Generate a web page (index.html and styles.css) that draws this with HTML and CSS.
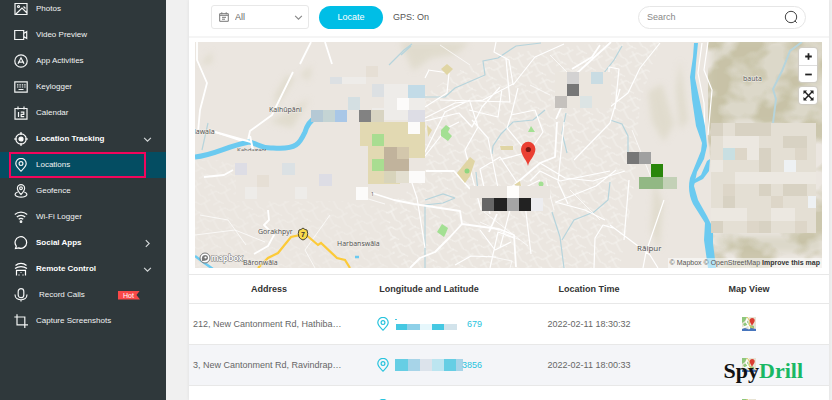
FILE: index.html
```html
<!DOCTYPE html>
<html lang="en">
<head>
<meta charset="utf-8">
<meta name="viewport" content="width=device-width, initial-scale=1">
<title>Locations</title>
<link rel="stylesheet" href="styles.css">
</head>
<body>
<svg class="defs" aria-hidden="true">
  <symbol id="pin" viewBox="0 0 14 14"><path d="M7 13.2C4.5 10.7 1.8 8.4 1.8 5.6a5.2 5.2 0 0 1 10.4 0c0 2.8-2.7 5.1-5.2 7.6z"/><circle cx="7" cy="5.6" r="1.9"/></symbol>
  <symbol id="down" viewBox="0 0 8 8"><path d="M1 2.5l3 3 3-3"/></symbol>
  <symbol id="right" viewBox="0 0 8 8"><path d="M2.5 1l3 3-3 3"/></symbol>
  <symbol id="minimap" viewBox="0 0 14 14">
    <path fill="#e8e3d3" d="M0 0h14v14H0z"/><path fill="#8fc77c" d="M0 0h5l-2 4-3 2zM1 7l5-3 1 5-4 1zM7 8l5 1v3H7z"/>
    <path stroke="#fff" stroke-width="1.4" fill="none" d="M6 0L4 5l3 4 1 5M0 11l7-3"/><path stroke="#e9c95f" fill="none" d="M5 0l3 4-1 4 5 4"/>
    <path fill="#4775bd" d="M0 12l3-1 4 1.5L9 11l5 1v2H0z"/><path fill="#db3d31" d="M10 9C9 6.500 7.700 5.500 7.700 3.500a2.500 2.500 0 0 1 5 0C12.700 5.500 11 6.500 10 9z"/>
  </symbol>
</svg>

<nav class="sidebar" aria-label="Main">
  <a class="item" href="#"><svg class="icon" viewBox="0 0 14 14"><path d="M1 1.500h12v11H1zM2 12l6-6 5 5M9.500 4.500l2 2"/><circle cx="4.500" cy="4.500" r="1"/></svg><span>Photos</span></a>
  <a class="item" href="#"><svg class="icon" viewBox="0 0 14 14"><path d="M.7 2.500h9v9h-9zM9.700 5.500l3-2v7l-3-2"/></svg><span>Video Preview</span></a>
  <a class="item" href="#"><svg class="icon" viewBox="0 0 14 14"><circle cx="7" cy="7" r="6.200"/><path d="M4 9.800L7 3.800l3 6M4 8.200h6"/></svg><span>App Activities</span></a>
  <a class="item" href="#"><svg class="icon" viewBox="0 0 14 14"><path d="M.8 1.800h12.400v10.400H.8z"/><path d="M3 4.800h1.400m1 0h1.400m1 0h1.400m1 0h1.400M3 7h1.400m1 0h1.400m1 0h1.400m1 0h1.400M4.500 9.500h5"/></svg><span>Keylogger</span></a>
  <a class="item" href="#"><svg class="icon" viewBox="0 0 14 14"><path d="M1 2.500h12v10.700H1zM4 .6v3M10 .6v3M4.500 6v5M6.800 6.200h3v2.200h-2.600v2.300h3"/></svg><span>Calendar</span></a>
  <a class="item group" href="#"><svg class="icon" viewBox="0 0 14 14"><circle cx="7" cy="7" r="5.200"/><circle class="solid" cx="7" cy="7" r="2"/><path d="M7 0v3M7 11v3M0 7h3M11 7h3"/></svg><span>Location Tracking</span><svg class="arrow"><use href="#down"/></svg></a>
  <a class="item active" href="#" aria-current="page"><svg class="icon"><use href="#pin"/></svg><span>Locations</span></a>
  <a class="item" href="#"><svg class="icon" viewBox="0 0 14 14"><path d="M7 10.500C5 8.500 3.400 6.500 3.400 4.300a3.600 3.600 0 0 1 7.200 0C10.600 6.500 9 8.500 7 10.500z"/><circle cx="7" cy="4.200" r="1.400"/><path d="M3.800 8C-.5 9.300.2 13.200 7 13.200S14.500 9.300 10.200 8"/></svg><span>Geofence</span></a>
  <a class="item" href="#"><svg class="icon" viewBox="0 0 14 14"><path d="M.8 4.500c3.600-3.300 8.800-3.300 12.400 0M2.800 7c2.400-2.300 6-2.300 8.400 0M4.700 9.300c1.400-1.200 3.200-1.200 4.600 0"/><circle class="solid" cx="7" cy="11.700" r=".8"/></svg><span>Wi-Fi Logger</span></a>
  <a class="item group" href="#"><svg class="icon" viewBox="0 0 14 14"><path d="M1.500 12.500l.8-2.400a5.800 5.800 0 1 1 2.400 1.800z"/></svg><span>Social Apps</span><svg class="arrow"><use href="#right"/></svg></a>
  <a class="item group" href="#"><svg class="icon" viewBox="0 0 14 14"><path d="M1.500 3.500c3.200-2.800 7.800-2.800 11 0M1 6.500c3.500-2.600 8.500-2.600 12 0M2.500 13.500V8.300h9v5.200M5 13.500v-1M7 11v-.8M9 13.500v-1"/></svg><span>Remote Control</span><svg class="arrow"><use href="#down"/></svg></a>
  <a class="item nested" href="#"><svg class="icon" viewBox="0 0 14 14"><rect x="4.200" y=".7" width="5.600" height="9" rx="2.800"/><path d="M1 6.500c0 7 12 7 12 0M7 11.800v1.800"/></svg><span>Record Calls</span><em class="hot">Hot</em></a>
  <a class="item" href="#"><svg class="icon" viewBox="0 0 14 14"><path d="M.3 3h10.500v11M3 .3v10.500h11"/></svg><span>Capture Screenshots</span></a>
</nav>

<main class="panel">
  <form class="toolbar">
    <label class="period">
      <svg class="small" viewBox="0 0 10 10"><path d="M.7 1.700h8.600v7.600H.7zM.7 3.300h8.600M2.800.3v2M7.200.3v2M3 5.300h4M3 7.200h3"/></svg>
      <select aria-label="Period"><option>All</option></select>
      <svg class="caret"><use href="#down"/></svg>
    </label>
    <button class="locate" type="button">Locate</button>
    <span class="gps">GPS: On</span>
    <label class="search">
      <input type="search" placeholder="Search" aria-label="Search">
      <svg class="lens" viewBox="0 0 14 14"><circle cx="7" cy="7" r="5.700"/><path d="M10.800 10.800l2 2"/></svg>
    </label>
  </form>

  <section class="map" aria-label="Map">
    <svg class="canvas" viewBox="195 42 627 226" preserveAspectRatio="xMidYMid slice">
      <defs>
        <filter id="soft" x="-20%" y="-20%" width="140%" height="140%"><feGaussianBlur stdDeviation="3"/></filter>
        <filter id="relief" x="0" y="0" width="100%" height="100%" color-interpolation-filters="sRGB"><feTurbulence type="fractalNoise" baseFrequency=".03 .04" numOctaves="3" seed="8"/><feColorMatrix values="0 0 0 0 .75  0 0 0 0 .73  0 0 0 0 .6  4 0 0 0 -1.600"/></filter>
        <pattern id="streets" width="23" height="19" patternUnits="userSpaceOnUse" patternTransform="rotate(-28)"><path d="M0 4h9l3 5h11M5 0v12l5 7M16 9v10M0 15h8M16 0l3 4v5" fill="none" stroke="#fbfaf8" stroke-width=".7"/></pattern>
        <clipPath id="hills"><path d="M708 42h114v226H714l-3-100-6-60z"/></clipPath>
      </defs>
      <path fill="#ebe6e0" d="M195 42h627v226H195z"/>
      <path fill="url(#streets)" opacity=".8" d="M425 95l40-28 55-15 90-10h50l-20 60-5 80-15 86H395l-10-60 40-30z"/>
      <path fill="url(#streets)" opacity=".45" d="M195 160h90l60 40 50 10v58H195z"/>
      <g filter="url(#soft)" fill="#d6d1bb" opacity=".5">
        <path d="M400 42h70l-14 12-25 4-18 13zM275 95l12-20 8 3-20 30zM270 122l40-24-18 30zM300 75l12-10-3 16zM200 65l12-14v12zM648 92l14-8 12 40-10 18-12-20zM654 180l9 25-4 45-8-20zM680 60l8 60-8 10-4-40z"/>
      </g>
      <g clip-path="url(#hills)">
        <path fill="#dcd8c9" filter="url(#soft)" d="M712 42h110v80H712zM715 236h107v16H720z"/>
        <path filter="url(#relief)" opacity=".7" d="M708 42h114v226H708z"/>
      </g>

      <g fill="none" stroke="#b6d4dc" stroke-width="1.200">
        <path d="M425 97h20l10-9 30-13-2-14 15-3 18-12 25-3M545 110l-12 10-20 2-12 12-8 12-1 8M425 200l18-6 12 4M455 198l-12 5-18 2v63M476 172l2 20M552 212l8 25 4 31M562 240l12-20 20-8 14-12 2-18M566 113l-4 20 5 20M600 78l14-18 8-14M610 120l12 4 6 12v20M401 55l10-9M202 150l6-27M389 65l15-15 8-6"/>
        <path stroke-width="2" d="M773 123l3-24-3-10 9-18 8-20 12-9"/>
      </g>
      <g fill="none" stroke="#fff" stroke-linejoin="round">
        <path stroke-width="1.800" d="M197 42v18l10 23-7 27-2 22M215 132l36 12 4 12M248 140l2-9 22-16 21-43M300 64l11-22M325 42l7 22M204 177l20-2 9-5M268 210l1 10-5 5 10 10-6 11-14 8M372 193l22 7 20 4 46 7 2 13M410 268l10-10 15-6 15-15 12-13 37 5 15 6 2 32M497 214l-8 18M512 187l28-24 15-6 2-35M426 171h28l16 18M611 42l-35 32-20 45M600 45l-8 12-20 12"/>
        <path stroke-width="1.200" d="M425 118l30-15 28-3 30-16-4-24-15-8 2-10M500 87l-18 20-10 20-13-14-34 8M513 85l22-28 29-13M470 102l8 25-13 23 16 60M472 120l16 18 10 50 12 20M428 70l21 3-2 20-22 14M425 78l4-8M425 152l20-40 25-12M425 156l22-28 12-6M440 100l70 2-4-43M502 89l-4 28-29-7M511 115l24-5 8 22-14 20-30 8M518 88l-7 28-4 12 20 24M520 187l-20-30-20 12 10 45M540 163l25 15 28 3 32-10M610 171l-50 10-20-10-10 10M555 202l30 8 20 10M568 204l-10-22 6-60M540 180l-16 8M613 228l-10-3-8 13-1 30M556 202l40-16 20-16M574 160l36-37 10-34M615 109l4-40-10-2v32l-12 6M660 43l-20 25-12 25-18 14M610 225l20 15 20 15 8 13M629 180l-5 60M664 200l-18 52-3 16M702 43l-4 30 6 30 1 35M708 42l-4 28 8 20-4 45M425 248l-8-50-10-30M490 268l8-36 16 6M480 230l15 20 16-8M455 265l16-9 25 1M525 204l6 50M510 210l-10 38"/>
      </g>
      <g fill="none" stroke="#fff" stroke-width=".8" opacity=".9"><path d="M484 212l44 34M480 222l40 18M488 256l24 5-2 7M200 215l28 5 18 25M195 235l40-5 30 12M310 200l35-8 40 12M330 215l-25 35 10 18M440 45l30 20M550 55l30 30M530 85l20 10M546 180l8 30M570 190l30 30M632 130l20 50"/></g>

      <g fill="#a3e093"><path d="M441 130l5-5 4 3-2 4 4 4-4 5-7-5zM442 224l6 4-2 5-2 4-7-5zM528 132l3-6 4 6z"/><circle cx="467" cy="171" r="2.500"/><circle cx="541" cy="184" r="2.500"/></g>
      <path fill="#e0d5a4" d="M441 69l6-5 6 5-6 6zM470 157l5 4-5 15-5 7-8-10zM500 146h13v4h-12zM514 185l6-4 1 5zM427 125l5 5-4 7z"/><circle fill="#8fd67f" cx="467" cy="171" r="2.500"/>
      <path fill="none" stroke="#6bcaf0" stroke-width="5" d="M195 157c20-2 32-11 54-15 8 1 12 7 24 6 24 2 27-5 32-16q3-10 10-14"/>
      <path fill="none" stroke="#fff" stroke-width="2" d="M250 136l3 14M215 132l36 10"/>
      <path fill="#ebe6e0" d="M236 151h130v50H236z"/>
      <path fill="#6bcaf0" d="M694 43h4l-2 20-1 15 5 24 5 24 2 20-3 13-7 13-3 14 4 14 9 16 6 12v15l3 25h-8l-4-28 1-17-12-19q-6-12-3-26l11-27 1-8-6-17-4-27-2-22 3-20z"/>
      <path fill="#6bcaf0" d="M692 181l9-6 6-14 3-2-1 12-6 8-10 5z"/><path stroke="#6bcaf0" stroke-width="2.500" fill="none" d="M195 256l8 6 10 7M355 257h4"/>
      <path fill="none" stroke="#fcca38" stroke-width="2.200" d="M258 268l10-10 10-5 13-16 14-3 13 11 3-2 16 15 8 2 5 8"/>

      <g class="mosaic" shape-rendering="crispEdges">
        <path fill="#e6dfd5" d="M366 66h12v11h-12zM257 175h12v12h-12z"/><path fill="#dce0e3" d="M330 77h12v7h-12zM372 84h12v13h-12zM282 163h12v12h-12z"/>
        <path fill="#eeece9" d="M342 77h24v7h-24zM371 120h54v-24h-17v-12h-24v24h-12zM295 187h12v12h-12zM245 187h12v12h-12z"/>
        <path fill="#d4dfe2" d="M348 97h12v13h-12z"/><path fill="#b5c9d5" d="M311 110h12v12h-12z"/><path fill="#c4d4d4" d="M323 110h12v12h-12z"/><path fill="#a9c7e7" d="M335 110h12v12h-12z"/><path fill="#828282" d="M359 110h12v12h-12z"/><path fill="#d8d4c2" d="M371 110h13v12h-13z"/>
        <path fill="#e2d9b2" d="M360 122h65v36h-41v14h16v12h-32v-38h-8z"/><path fill="#a9dd91" d="M372 134h12v12h-12zM372 159h12v12h-12z"/><path fill="#c1b39c" d="M384 147h13v12h12v12h-25z"/><path fill="#d3c7ac" d="M397 147h12v12h-12z"/><path fill="#c2dbe7" d="M408 85h17v13h-17z"/><path fill="#fcfbfa" d="M397 98h12v12h-12zM408 122h12v12h-12zM409 171h16v12h-16zM356 187h12v13h-12z"/><path fill="#dddde5" d="M408 110h17v12h-17zM319 174h13v12h-13zM235 163h12v12h-12z"/><path fill="#dbe1e4" d="M283 163h12v12h-12z"/><path fill="#d8d4bb" d="M384 171h12v12h-12z"/><path fill="#e3dfd0" d="M396 171h13v12h-13z"/>
        <path fill="#ebe6df" d="M555 72h56v36h-56z"/><path fill="#d3d2d2" d="M567 72h12v12h-12z"/><path fill="#777" d="M567 84h12v12h-12z"/><path fill="#c5c1bd" d="M555 96h12v12h-12z"/><path fill="#c9dce3" d="M591 72h12v12h-12z"/><path fill="#dce4e4" d="M580 96h12v12h-12z"/><path fill="#e9e4de" d="M470 186h80v12h-80z"/><path fill="#fffefc" d="M507 186h12v12h-12z"/>
        <path fill="#666" d="M482 198h12v13h-12z"/><path fill="#222" d="M494 198h13v13h-13zM519 198h12v13h-12z"/><path fill="#a5a5a5" d="M507 198h12v13h-12z"/><path fill="#ededf0" d="M531 198h12v13h-12z"/>
        <path fill="#777" d="M627 152h12v12h-12z"/><path fill="#a0a0a0" d="M639 152h12v12h-12z"/><path fill="#29860b" d="M651 164h12v13h-12z"/><path fill="#92b884" d="M639 177h24v12h-24z"/><path fill="#c3d1b7" d="M663 177h14v12h-14z"/>
        <path fill="#e4dfd4" d="M711 123h105v110H711z"/><path fill="#d8d2c3" d="M711 123h12v13h-12zM735 123h36v13h-36zM783 136h24v12h-24zM759 148h12v24h-12zM723 196h12v12h-12zM759 184h12v12h-12zM783 184h24v12h-24zM711 221h12v12h-12zM759 221h12v12h-12z"/>
        <path fill="#ece8e1" d="M723 136h36v12h-36zM735 172h60v12h-60zM711 160h12v12h-12zM711 208h36v13h-36zM771 208h24v13h-24zM747 148h12v12h-12zM783 172h33v12h-33z"/><path fill="#ddd6c8" d="M771 196h12v12h-12zM747 221h12v12h-12zM795 221h12v12h-12zM735 148h12v12h-12zM795 148h12v12h-12zM723 184h12v12h-12z"/><path fill="#c8dfe2" d="M723 148h12v12h-12z"/><path fill="#eef1f3" d="M784 160h12v12h-12zM808 196h8v12h-8z"/>
      </g>

      <path fill="#f8d94b" stroke="#4b4733" d="M299 230q2 0 4-2 2 2 4 2 1.500 4 0 7-1 2-4 3-3-1-4-3-1.500-3 0-7z"/><text class="shield" x="301" y="237">7</text>
      <g class="places"><text x="269" y="112">Kalhūpāni</text><text x="194" y="134">lawala</text><text x="258" y="234">Gorakhpyr</text><text x="337" y="246">Harbanswāla</text><text x="243" y="265">Bāronwāla</text><text x="743" y="81">bauta</text><text class="town" x="637" y="251">Rāipur</text><text class="road" x="371" y="196">1</text></g>
      <svg x="236" y="145" width="30" height="6" viewBox="236 145 30 6"><text class="cut" x="237" y="152">Kahdagaon</text></svg>
      <path fill="#ea3f32" d="M528 166c-1-6-7-10-7-17a7.200 7.200 0 0 1 14.400 0c0 7-6.400 11-7.400 17z"/><circle fill="#7c1712" cx="528.300" cy="149.500" r="2.600"/>
      <circle cx="205" cy="258" r="5" fill="#fff" stroke="#777"/><path fill="#777" d="M202 261q-1-6 3-6 3 0 3 3t-6 3z"/><circle cx="205.500" cy="257.500" r="1.100" fill="#fff"/><text class="brand" x="211" y="261">mapbox</text>
    </svg>
    <div class="controls">
      <div class="zoom"><button type="button" aria-label="Zoom in"><svg viewBox="0 0 10 10"><path d="M2 5h6M5 2v6"/></svg></button><button type="button" aria-label="Zoom out"><svg viewBox="0 0 10 10"><path d="M2 5h6"/></svg></button></div>
      <button class="full" type="button" aria-label="Fullscreen"><svg viewBox="0 0 12 12"><path d="M2 2l8 8M10 2l-8 8"/><path class="tips" d="M.5.500h4l-4 4zM11.500.500h-4l4 4zM.5 11.500h4l-4-4zM11.500 11.500h-4l4-4z"/></svg></button>
    </div>
    <div class="credits"><a href="#">© Mapbox</a> <a href="#">© OpenStreetMap</a> <a class="improve" href="#">Improve this map</a></div>
  </section>

  <table class="history">
    <thead><tr><th>Address</th><th>Longitude and Latitude</th><th>Location Time</th><th>Map View</th></tr></thead>
    <tbody>
      <tr><td class="address">212, New Cantonment Rd, Hathiba…</td>
        <td><a class="coords" href="#"><svg class="icon"><use href="#pin"/></svg><svg class="mask" viewBox="0 0 68 12" shape-rendering="crispEdges"><path fill="#45c8e2" d="M1 6h11v6H1zM37 6h12v6H37zM0 1h2v1H0z"/><path fill="#8ed0e8" d="M12 6h13v6H12z"/><path fill="#e6f7fc" d="M25 6h12v6H25z"/><path fill="#d2e3eb" d="M49 6h13v6H49z"/></svg><span>679</span></a></td>
        <td>2022-02-11 18:30:32</td><td><a href="#" aria-label="Open map"><svg class="mini"><use href="#minimap"/></svg></a></td></tr>
      <tr><td class="address">3, New Cantonment Rd, Ravindrap…</td>
        <td><a class="coords" href="#"><svg class="icon"><use href="#pin"/></svg><svg class="mask" viewBox="0 0 68 12" shape-rendering="crispEdges"><path fill="#66cee4" d="M0 0h13v12H0zM49 0h12v12H49z"/><path fill="#a7d4e8" d="M13 0h12v12H13zM61 0h7v12h-7z"/><path fill="#dce3eb" d="M25 0h12v12H25z"/><path fill="#bce5f0" d="M37 0h12v12H37z"/></svg><span>3856</span></a></td>
        <td>2022-02-11 18:00:33</td><td><a href="#" aria-label="Open map"><svg class="mini"><use href="#minimap"/></svg></a></td></tr>
      <tr><td class="address"></td><td><a class="coords" href="#" aria-label="Coordinates"><svg class="icon"><use href="#pin"/></svg></a></td><td></td><td><a href="#" aria-label="Open map"><svg class="mini"><use href="#minimap"/></svg></a></td></tr>
    </tbody>
  </table>
</main>
<div class="watermark">Spy<span>Drill</span></div>
</body>
</html>
```

FILE: styles.css
```css
* { box-sizing: border-box; }
body {
  margin: 0;
  height: 100vh;
  overflow: hidden;
  display: flex;
  background: #f0f0f0;
  font: 9px/12px "Liberation Sans", Arial, sans-serif;
  color: #666;
}
a { color: inherit; text-decoration: none; }
button, select, input { font: inherit; color: inherit; border: 0; padding: 0; background: none; outline: 0; }
svg { fill: none; stroke: none; }
.defs { position: absolute; width: 0; height: 0; }

.sidebar { flex: 0 0 166px; background: #2f383b; color: #f2f4f4; font-size: 8px; margin-top: -4px; }
.item { position: relative; display: flex; align-items: center; gap: 8px; height: 26px; padding: 0 14px; }
.icon { width: 14px; height: 14px; flex: none; stroke: currentColor; stroke-width: 1.2; }
.solid { fill: currentColor; }
.group { font-weight: bold; color: #fff; }
.active { background: #044d62; }
.active::after { content: ""; position: absolute; inset: 0 20px 0 9px; border: 2px solid #f2055c; }
.arrow { width: 9px; height: 9px; margin-left: auto; stroke: #d5d9da; }
.nested span { margin-left: 3px; }
.hot {
  margin-left: auto;
  margin-right: 12px;
  width: 22px;
  padding-left: 5px;
  font: 7px/9px "Liberation Sans", Arial, sans-serif;
  color: #fff;
  background: #fa4848;
  clip-path: polygon(0 0, 100% 0, 84% 50%, 100% 100%, 0 100%);
}

.panel { flex: 1; min-width: 0; margin: 0 3px 0 23px; background: #fff; overflow: hidden; box-shadow: 0 0 3px #ddd; }
.toolbar { display: flex; align-items: center; padding: 5px 23px 7px 22px; border-bottom: 2px solid #f5f5f5; }
.period { display: flex; align-items: center; gap: 6px; width: 98px; height: 24px; padding: 0 5px 0 7px; border: 1px solid #e8e8e8; border-radius: 3px; }
.period select { flex: 1; appearance: none; }
.small { width: 10px; height: 10px; stroke: #777; }
.caret { width: 9px; height: 9px; stroke: #888; }
.locate { width: 64px; height: 23px; margin: 0 10px; border-radius: 12px; background: #00bee6; color: #fff; }
.gps { color: #555; }
.search { display: flex; align-items: center; width: 168px; height: 23px; margin-left: auto; padding: 0 7px 0 8px; border: 1px solid #e6e6e6; border-radius: 12px; }
.search input { flex: 1; min-width: 0; appearance: none; }
.search input::placeholder { color: #888; opacity: 1; }
.lens { width: 14px; height: 14px; stroke: #444; }

.map { position: relative; margin: 4px 7px 6px 6px; }
.canvas { display: block; width: 100%; height: 226px; }
.places { fill: #4d4d4d; stroke: #f3f0eb; stroke-width: 1; paint-order: stroke; font: 7px "Open Sans", sans-serif; }
.town { font-size: 8px; }
.road { font-size: 5px; }
.cut { fill: #555; font: 6px "Open Sans", sans-serif; }
.shield { fill: #333; font: bold 7px "Liberation Sans", sans-serif; }
.brand { fill: #fff; stroke: #777; stroke-width: 1; paint-order: stroke; font: bold 9px Lato, sans-serif; }
.controls { position: absolute; top: 6px; right: 5px; display: grid; gap: 5px; }
.zoom, .full { width: 18px; border-radius: 3px; background: #fff; box-shadow: 0 0 1px 1px #d0cdc5; }
.zoom button, .full { display: grid; place-items: center; width: 18px; height: 17px; }
.zoom button + button { border-top: 1px solid #ddd; }
.controls svg { width: 11px; height: 11px; stroke: #222; stroke-width: 1.6; }
.controls .tips { fill: #222; stroke: none; }
.credits { position: absolute; right: 0; bottom: 0; padding: 0 2px; background: #ffffff80; font-size: 7px; line-height: 10px; color: #555; }
.improve { font-weight: bold; color: #333; }

.history { width: 100%; table-layout: fixed; border-collapse: collapse; text-align: center; }
.history th { height: 29px; padding: 0; border-top: 1px solid #e8e8e8; color: #333; }
.history td { height: 41px; padding: 0; border-top: 1px solid #e8e8e8; }
.history tr:nth-child(2) td { background: #f4f5f8; }
.history .address { padding-left: 4px; text-align: left; white-space: nowrap; }
.coords { display: flex; align-items: center; padding-left: 27px; color: #27c3dd; }
.mask { width: 68px; height: 12px; margin-left: 5px; }
.coords span { width: 20px; margin-left: -1px; text-align: right; }
.mini { display: inline-block; width: 14px; height: 14px; vertical-align: middle; }
.watermark { position: absolute; right: 29px; bottom: 16px; font: bold 22px/26px "Liberation Serif", serif; color: #111; }
.watermark span { color: #19b865; }
```
